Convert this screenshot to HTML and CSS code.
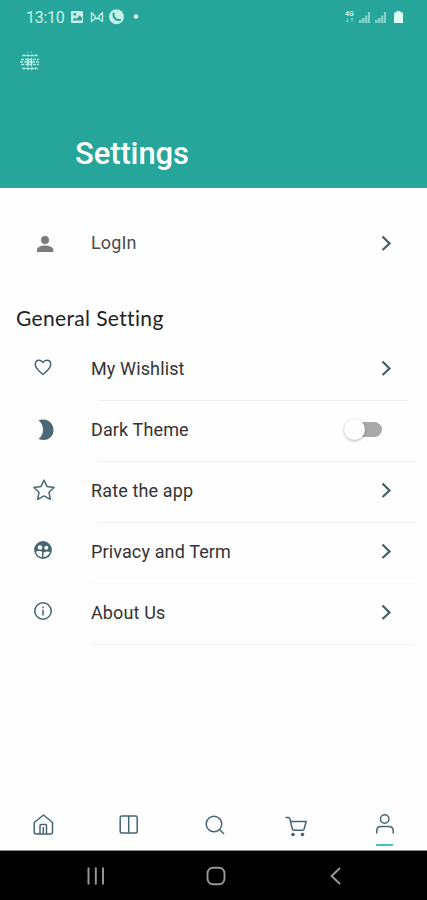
FILE: index.html
```html
<!DOCTYPE html>
<html lang="en">
<head>
    <meta charset="UTF-8">
    <meta name="viewport" content="width=device-width, initial-scale=1.0">
    <title>Settings</title>
    <link rel="stylesheet" href="styles.css">
</head>
<body>
    <div class="screen">
        <header class="header">
            <div class="status-bar">
                <span class="clock">13:10</span>
                <svg class="status-left" width="72" height="18" viewBox="0 0 72 18">
                    <path fill="currentColor" fill-rule="evenodd" d="M2 3h10q1 0 1 1v10q0 1-1 1H2q-1 0-1-1V4q0-1 1-1zM2.500 12.500h9.500V9.500L9.500 7.500 6.500 11 4.500 9.500zM3.500 5v2.500h2.500V5z"/>
                    <path fill="none" stroke="currentColor" stroke-width="1.300" d="M21.500 4v10M32.500 4v10M22 5l3 3v3l-3 2M32 5l-3 3v3l3 2M25 9l2 2 2-2"/>
                    <circle cx="46.500" cy="8.800" r="7.500" fill="currentColor"/>
                    <path fill="none" stroke="#26a69a" stroke-width="2" stroke-linecap="round" d="M43.500 5.500c-.5 4 2.500 7 6.500 6.500"/>
                    <circle cx="66" cy="8.500" r="2.200" fill="#e6fffb"/>
                </svg>
                <svg class="status-right" width="60" height="18" viewBox="0 0 60 18">
                    <text class="network" x="0" y="8">4G</text>
                    <path fill="none" stroke="currentColor" opacity=".5" d="M2.500 10v4M1 12.500l1.500 1.500L4 12.500M7 14v-4M5.500 11.500L7 10l1.500 1.500"/>
                    <path fill="currentColor" opacity=".6" d="M14 12h2.500v3H14zM17 10h2.500v5H17zM20 7.500h2.500V15H20zM23 4h2v11h-2zM30 12h2.500v3H30zM33 10h2.500v5H33zM36 7.500h2.500V15H36zM39 4h2v11h-2z"/>
                    <path fill="#defff6" d="M51.500 3h4v1.500H58V15h-9V4.500h2.500z"/>
                </svg>
            </div>
            <svg class="logo" width="22" height="24" viewBox="0 0 22 24">
                <g fill="none" stroke="#d5fff5">
                    <path stroke-width="1.600" stroke-dasharray="3 1" d="M3.500 5.500h15M3.500 18.500h15"/>
                    <path stroke-width="1.300" stroke-dasharray="3 1" opacity=".75" d="M2 9.500h18M2 14.500h18"/>
                    <path stroke-width="1.300" stroke-dasharray="3 1" opacity=".75" d="M1 12h20"/>
                    <path stroke-width="1.400" d="M9 8.500v7M12.500 8.500v7"/>
                    <path stroke-dasharray="1.500 2" opacity=".5" d="M9 1.500v21M12.500 1.500v21"/>
                </g>
            </svg>
            <h1 class="title">Settings</h1>
        </header>

        <main class="content">
            <div class="row login">
                <svg class="icon" width="28" height="28" viewBox="0 0 28 28">
                    <circle cx="16" cy="11" r="4" fill="#7b7b7b"/>
                    <path fill="#7b7b7b" d="M8 23v-2.500c0-2.500 5-4 8-4s8.300 1.500 8.300 4V23z"/>
                </svg>
                <span class="label">LogIn</span>
                <svg class="chevron" width="12" height="16" viewBox="0 0 12 16"><path d="M1.500 1.500L8.500 8.500 1.500 15"/></svg>
            </div>

            <h2 class="section-title">General Setting</h2>

            <div class="row">
                <svg class="icon" width="28" height="28" viewBox="0 0 28 28">
                    <path class="line" d="M14 20.500C9 16.500 6.300 14 6.300 10.500c0-5 5.700-5.500 7.700-2 2-3.500 7.700-3 7.700 2 0 3.500-2.700 6-7.700 10z"/>
                </svg>
                <span class="label">My Wishlist</span>
                <svg class="chevron" width="12" height="16" viewBox="0 0 12 16"><path d="M1.500 1.500L8.500 8.500 1.500 15"/></svg>
            </div>
            <hr class="divider short">
            <div class="row">
                <svg class="icon" width="28" height="28" viewBox="0 0 28 28">
                    <path fill="#4a6975" d="M9.500 5.300C18 2.500 24.500 8 24.500 15S18.500 27 9.500 24C15.500 20 15.500 10 9.500 5.300z"/>
                </svg>
                <span class="label">Dark Theme</span>
                <span class="switch"></span>
            </div>
            <hr class="divider middle">
            <div class="row">
                <svg class="icon" width="28" height="28" viewBox="0 0 28 28">
                    <path class="line" d="M15 4.200l3.100 6.400 7 .900-5.100 4.800 1.300 7-6.300-3.400-6.300 3.400 1.300-7-5.100-4.800 7-.900z"/>
                </svg>
                <span class="label">Rate the app</span>
                <svg class="chevron" width="12" height="16" viewBox="0 0 12 16"><path d="M1.500 1.500L8.500 8.500 1.500 15"/></svg>
            </div>
            <hr class="divider middle">
            <div class="row">
                <svg class="icon" width="28" height="28" viewBox="0 0 28 28">
                    <circle cx="14" cy="13" r="8.900" fill="#466572"/>
                    <g fill="#fff">
                        <circle cx="11" cy="10.500" r="2.300"/>
                        <circle cx="17.300" cy="10.800" r="2"/>
                        <path d="M6.900 14.800q2.600-1.300 6.100-.3v5.700q-5-.7-6.100-5.400zM14.500 15.500q3.500-1.800 6.500-.5-1 4-6.500 5.200z"/>
                    </g>
                </svg>
                <span class="label">Privacy and Term</span>
                <svg class="chevron" width="12" height="16" viewBox="0 0 12 16"><path d="M1.500 1.500L8.500 8.500 1.500 15"/></svg>
            </div>
            <hr class="divider long faint">
            <div class="row">
                <svg class="icon" width="28" height="28" viewBox="0 0 28 28">
                    <circle class="line" cx="14" cy="13" r="8.200"/>
                    <path class="line" d="M14 11.800v5.700M14 8.500v1.700"/>
                </svg>
                <span class="label">About Us</span>
                <svg class="chevron" width="12" height="16" viewBox="0 0 12 16"><path d="M1.500 1.500L8.500 8.500 1.500 15"/></svg>
            </div>
            <hr class="divider long">
        </main>

        <nav class="tabs">
            <a class="tab">
                <svg width="30" height="30" viewBox="0 0 30 30">
                    <path class="line" d="M6.200 12.500L15.500 5l9 7.500v9.500q0 2-2 2H8.200q-2 0-2-2z"/>
                    <path class="line" d="M12 24v-8.500q0-1 1-1h4.500q1 0 1 1V24M15.300 17v7"/>
                </svg>
            </a>
            <a class="tab">
                <svg width="30" height="30" viewBox="0 0 30 30">
                    <rect class="line" x="7.200" y="6" width="17" height="17" rx="1.500"/>
                    <path class="line" d="M15.700 6v17"/>
                </svg>
            </a>
            <a class="tab">
                <svg width="30" height="30" viewBox="0 0 30 30">
                    <circle class="line" cx="15" cy="14" r="7.800"/>
                    <path class="line" d="M20.500 19.500l4.500 4.500"/>
                </svg>
            </a>
            <a class="tab">
                <svg width="30" height="30" viewBox="0 0 30 30">
                    <path class="line" d="M1.500 7.500H4.500q1 0 1.300 1.200l2.500 10q.4 1.500 1.700 1.500h8.500q1.200 0 1.600-1.200l2.100-7.500H6.500"/>
                    <circle cx="9" cy="24.500" r="1.800" fill="#466572"/>
                    <circle cx="18.500" cy="24.500" r="1.800" fill="#466572"/>
                </svg>
            </a>
            <a class="tab active">
                <svg width="30" height="30" viewBox="0 0 30 30">
                    <circle class="line" cx="15.700" cy="9" r="4.200"/>
                    <path class="line" d="M7.700 23.500v-2.500q0-4.500 4.500-4.500h7.500q4.500 0 4.500 4.500v2.500"/>
                </svg>
            </a>
        </nav>

        <footer class="system-nav">
            <svg width="20" height="20" viewBox="0 0 20 20"><path d="M2.500 1.500v17M9.800 1.500v17M17 1.500v17"/></svg>
            <svg width="20" height="20" viewBox="0 0 20 20"><rect x="1.500" y="1.800" width="17" height="16.500" rx="5.500"/></svg>
            <svg width="20" height="20" viewBox="0 0 20 20"><path d="M14 2L5.500 10l8.500 8"/></svg>
        </footer>
    </div>
</body>
</html>
```

FILE: styles.css
```css
body {
    margin: 0;
    font-family: Roboto, sans-serif;
    background-color: #fefefe;
}
.screen {
    display: flex;
    flex-direction: column;
    height: 900px;
    overflow: hidden;
}
.header {
    box-sizing: border-box;
    height: 188px;
    background-color: #26a69a;
    color: #c5efe7;
}
.status-bar {
    display: flex;
    align-items: center;
    height: 34px;
    padding: 0 22px 0 26px;
}
.clock {
    width: 44px;
    font-size: 16px;
    letter-spacing: -0.3px;
}
.status-right {
    margin-left: auto;
}
.network {
    font-size: 7px;
    font-weight: bold;
    fill: #c5efe7;
}
.logo {
    display: block;
    margin: 16px 0 0 19px;
}
.title {
    margin: 61px 0 0 75px;
    color: #fff;
    font-size: 31px;
    font-weight: 500;
    letter-spacing: -0.1px;
    line-height: 38px;
}
.content {
    flex: 1;
}
.row {
    display: flex;
    align-items: center;
    box-sizing: border-box;
    height: 60px;
    padding: 0 34px 4px 29px;
}
.login {
    margin-top: 26px;
    height: 61px;
}
.icon {
    width: 28px;
    margin-right: 34px;
}
.label {
    flex: 1;
    color: #333;
    font-size: 18px;
    letter-spacing: 0.13px;
}
.login .label {
    color: #4c4c4c;
}
.line {
    fill: none;
    stroke: #466572;
    stroke-width: 1.5;
    stroke-linejoin: round;
}
.chevron path {
    fill: none;
    stroke: #416068;
    stroke-width: 2.2;
}
.section-title {
    margin: 30px 0 9px 16px;
    color: #222;
    font-family: Lato, sans-serif;
    font-size: 21px;
    font-weight: 400;
    letter-spacing: 0.35px;
    line-height: 26px;
}
.switch {
    display: flex;
    align-items: center;
    width: 31px;
    height: 15px;
    margin-right: 11px;
    border-radius: 8px;
    background-color: #a9a9a9;
}
.switch::before {
    content: "";
    width: 21px;
    height: 21px;
    flex: none;
    margin-left: -7px;
    border-radius: 50%;
    background-color: #fdfdfd;
    box-shadow: 0 1px 3px rgba(0, 0, 0, 0.3);
}
.divider {
    height: 1px;
    border: none;
    background-color: #f1f1f1;
}
.short {
    margin: 0 19px 0 99px;
}
.middle {
    margin: 0 12px 0 98px;
}
.long {
    margin: 0 13px 0 92px;
}
.faint {
    background-color: #f8f8f8;
}
.tabs {
    display: flex;
    height: 40px;
    border-bottom: 1px solid #888;
}
.tab {
    display: flex;
    flex: 1;
    flex-direction: column;
    align-items: center;
}
.active::after {
    content: "";
    width: 17px;
    height: 2px;
    margin-top: 4px;
    background-color: #45c4b9;
}
.system-nav {
    display: flex;
    justify-content: space-between;
    align-items: center;
    height: 49px;
    padding: 0 81px 0 86px;
    background-color: #000;
}
.system-nav svg {
    fill: none;
    stroke: #999;
    stroke-width: 1.9;
}
```
